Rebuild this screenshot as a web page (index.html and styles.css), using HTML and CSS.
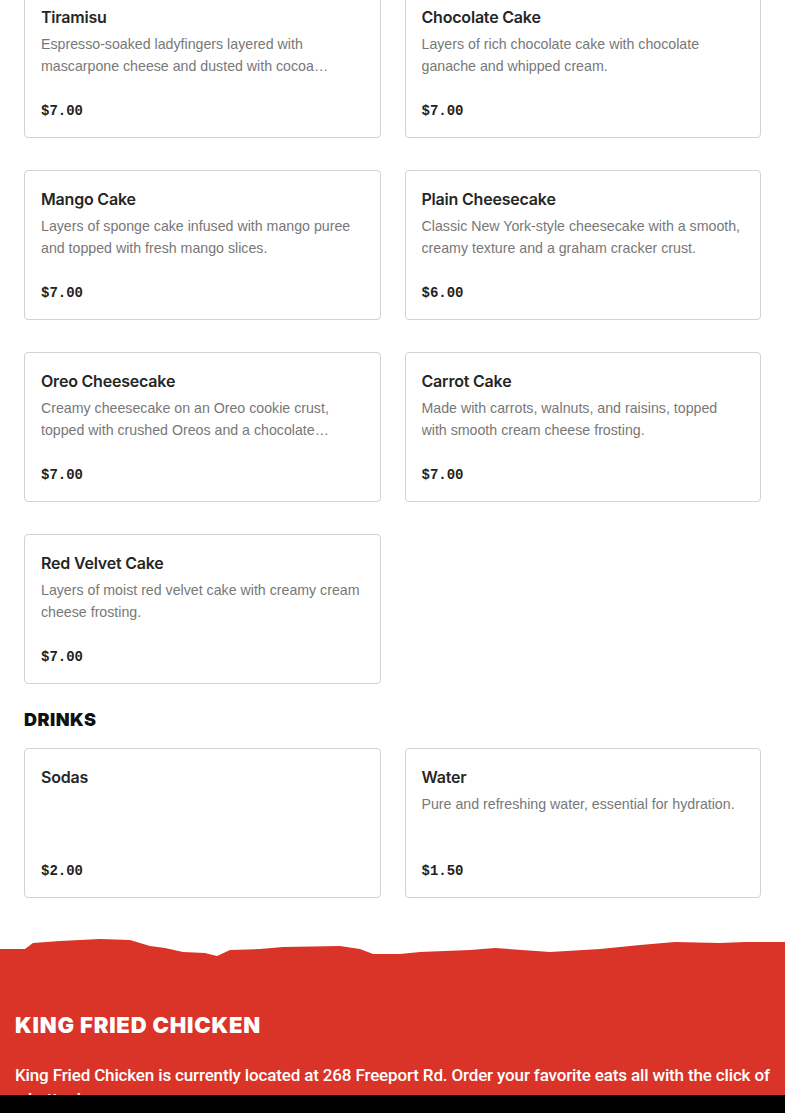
FILE: index.html
```html
<!DOCTYPE html>
<html lang="en">
<head>
<meta charset="utf-8">
<title>King Fried Chicken — Menu</title>
<link rel="stylesheet" href="styles.css">
</head>
<body>
<main class="menu">
  <section class="section section-first">
    <div class="grid">
      <article class="card"><h3 class="card-title">Tiramisu</h3><p class="card-desc">Espresso-soaked ladyfingers layered with mascarpone cheese and dusted with cocoa powder for a classic Italian finish.</p><p class="card-price">$7.00</p></article>
      <article class="card"><h3 class="card-title">Chocolate Cake</h3><p class="card-desc">Layers of rich chocolate cake with chocolate ganache and whipped cream.</p><p class="card-price">$7.00</p></article>
      <article class="card"><h3 class="card-title">Mango Cake</h3><p class="card-desc">Layers of sponge cake infused with mango puree and topped with fresh mango slices.</p><p class="card-price">$7.00</p></article>
      <article class="card"><h3 class="card-title">Plain Cheesecake</h3><p class="card-desc">Classic New York-style cheesecake with a smooth, creamy texture and a graham cracker crust.</p><p class="card-price">$6.00</p></article>
      <article class="card"><h3 class="card-title">Oreo Cheesecake</h3><p class="card-desc">Creamy cheesecake on an Oreo cookie crust, topped with crushed Oreos and a chocolate drizzle.</p><p class="card-price">$7.00</p></article>
      <article class="card"><h3 class="card-title">Carrot Cake</h3><p class="card-desc">Made with carrots, walnuts, and raisins, topped with smooth cream cheese frosting.</p><p class="card-price">$7.00</p></article>
      <article class="card"><h3 class="card-title">Red Velvet Cake</h3><p class="card-desc">Layers of moist red velvet cake with creamy cream cheese frosting.</p><p class="card-price">$7.00</p></article>
    </div>
  </section>
  <section class="section">
    <h2 class="section-title">DRINKS</h2>
    <div class="grid">
      <article class="card"><h3 class="card-title">Sodas</h3><p class="card-desc"></p><p class="card-price">$2.00</p></article>
      <article class="card"><h3 class="card-title">Water</h3><p class="card-desc">Pure and refreshing water, essential for hydration.</p><p class="card-price">$1.50</p></article>
    </div>
  </section>
</main>
<footer class="footer">
  <svg class="footer-edge" viewBox="0 0 785 22" preserveAspectRatio="none" aria-hidden="true">
    <path fill="#d93427" d="M0 13 L25 13 L33 7 L60 5 L100 3 L130 4 L150 10 L165 12 L183 16 L205 17 L217 20 L230 14 L260 13 L283 11 L340 10 L360 13 L373 18 L400 18 L420 16 L470 14 L495 12 L550 16 L600 13 L640 9 L675 6 L720 7 L745 6 L785 6 L785 22 L0 22 Z"/>
  </svg>
  <div class="footer-body">
    <h2 class="footer-title">KING FRIED CHICKEN</h2>
    <p class="footer-text">King Fried Chicken is currently located at 268 Freeport Rd. Order your favorite eats all with the click of a button!</p>
  </div>
</footer>
<div class="bottom-bar"></div>
</body>
</html>
```
FILE: styles.css
```css
* { box-sizing: border-box; }
html, body { margin: 0; padding: 0; background: #fff; }
body { font-family: "Inter", "Liberation Sans", sans-serif; color: #222; }

.menu { padding: 0 24px; }
.section-first { margin-top: -12px; }

.grid {
  display: grid;
  grid-template-columns: 1fr 1fr;
  column-gap: 24px;
  row-gap: 32px;
}

.card {
  border: 1px solid #d2d2d2;
  border-radius: 4px;
  padding: 16px 16px 15px;
  background: #fff;
}
.card-title {
  margin: 0;
  font-size: 16px;
  line-height: 24px;
  font-weight: 600;
  letter-spacing: -0.2px;
  color: #262626;
}
.card-desc {
  margin: 4px 0 0;
  font-family: "Liberation Sans", Arial, sans-serif;
  font-size: 14.2px;
  line-height: 22px;
  color: #787878;
  height: 44px;
  overflow: hidden;
  display: -webkit-box;
  -webkit-line-clamp: 2;
  -webkit-box-orient: vertical;
}
.card-price {
  margin: 23px 0 0;
  font-family: "Liberation Mono", "DejaVu Sans Mono", monospace;
  font-weight: 700;
  font-size: 14px;
  line-height: 22px;
  color: #222;
}

.section-title {
  margin: 25px 0 17px;
  font-size: 18px;
  line-height: 22px;
  font-weight: 900;
  color: #111;
  letter-spacing: 0.5px;
}

.footer { margin-top: 38px; }
.footer-edge { display: block; width: 100%; height: 22px; }
.footer-body {
  background: #d93427;
  padding: 53px 15px 20px;
  color: #fff;
}
.footer-title {
  margin: 0 0 24px;
  font-size: 22px;
  line-height: 28px;
  font-weight: 900;
  letter-spacing: 0.8px;
}
.footer-text {
  margin: 0;
  font-family: "Roboto", "Liberation Sans", sans-serif;
  font-size: 17px;
  line-height: 24px;
  font-weight: 500;
  letter-spacing: -0.15px;
}

.bottom-bar {
  position: fixed;
  left: 0; right: 0; bottom: 0;
  height: 18px;
  background: #000;
}
```
